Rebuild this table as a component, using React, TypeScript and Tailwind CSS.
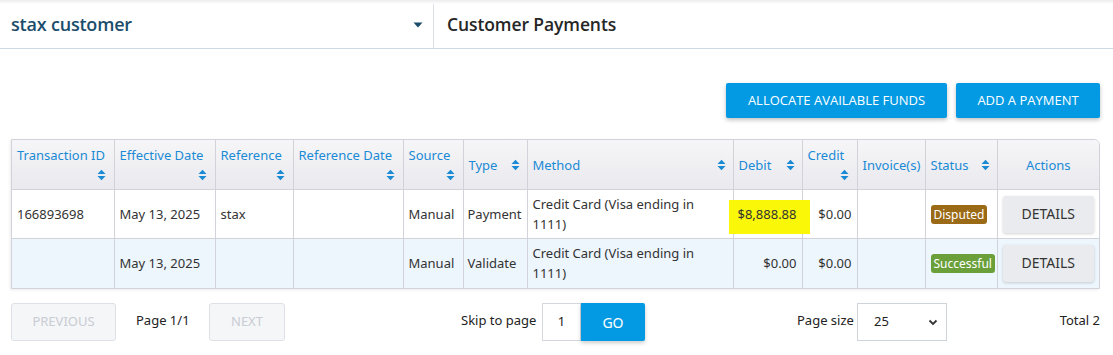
import React from "react";

const SortIcon = () => (
  <svg width="9" height="12" viewBox="0 0 9 12" className="shrink-0">
    <path d="M0.5 5 L4.5 0.8 L8.5 5 Z" fill="#1a8ad4" />
    <path d="M0.5 7 L4.5 11.2 L8.5 7 Z" fill="#1a8ad4" />
  </svg>
);

type Col = { label: string; w: number; kind: "stack" | "inline" | "plain" | "center" };

const cols: Col[] = [
  { label: "Transaction ID", w: 102, kind: "stack" },
  { label: "Effective Date", w: 101, kind: "stack" },
  { label: "Reference", w: 78, kind: "stack" },
  { label: "Reference Date", w: 110, kind: "stack" },
  { label: "Source", w: 60, kind: "stack" },
  { label: "Type", w: 64, kind: "inline" },
  { label: "Method", w: 206, kind: "inline" },
  { label: "Debit", w: 69, kind: "inline" },
  { label: "Credit", w: 55, kind: "stack" },
  { label: "Invoice(s)", w: 68, kind: "plain" },
  { label: "Status", w: 72, kind: "inline" },
  { label: "Actions", w: 102, kind: "center" },
];

const Badge = ({ text, color }: { text: string; color: string }) => (
  <span
    className={`inline-block rounded-[3px] px-[3px] text-[12px] leading-[19px] text-white ${color}`}
  >
    {text}
  </span>
);

const DetailsBtn = () => (
  <button className="h-[37px] w-[91px] rounded-[3px] bg-[#e9ebee] text-[14px] text-[#333] shadow-[0_1px_3px_rgba(0,0,0,0.18)]">
    DETAILS
  </button>
);

export default function App() {
  const tbl = "font-['Noto_Sans',sans-serif]";
  return (
    <div className="w-[1113px] h-[355px] overflow-hidden bg-white font-['Open_Sans',sans-serif]">
      {/* Top header */}
      <div className="relative flex h-[49px] border-b border-[#cfd9e2] bg-white">
        <div className="pointer-events-none absolute inset-x-0 top-0 h-[4px] bg-gradient-to-b from-[#ececec] to-white" />
        <div className="flex w-[434px] items-center justify-between border-r border-[#d8dfe6] pl-[11px] pr-[8px]">
          <span className="text-[18px] font-semibold text-[#1b4d6b] tracking-[-0.2px]">stax customer</span>
          <svg width="10" height="6" viewBox="0 0 10 6" className="mt-[1px] mr-[2px]">
            <path d="M0.5 0.5 L9.5 0.5 L5 5.5 Z" fill="#1b4d6b" />
          </svg>
        </div>
        <div className="flex items-center pl-[13px]">
          <span className="text-[17.5px] font-semibold text-[#262626] tracking-[-0.1px]">Customer Payments</span>
        </div>
      </div>

      {/* Content */}
      <div className="px-[11px]">
        <div className="flex justify-end gap-[9px] pt-[34px] pr-[2px]">
          <button className="h-[35px] w-[221px] rounded-[2px] bg-[#049ae3] text-[13px] text-white shadow-[0_2px_4px_rgba(0,0,0,0.25)]">
            ALLOCATE AVAILABLE FUNDS
          </button>
          <button className="h-[35px] w-[144px] rounded-[2px] bg-[#049ae3] text-[13px] text-white shadow-[0_2px_4px_rgba(0,0,0,0.25)]">
            ADD A PAYMENT
          </button>
        </div>

        <div className={`mt-[21px] w-[1089px] overflow-hidden rounded-tr-[6px] border border-[#d2d2da] shadow-[-1px_1px_3px_rgba(0,0,0,0.08)] ${tbl}`}>
          <table className="w-full table-fixed border-collapse text-[13px]">
            <colgroup>
              {cols.map((c, i) => (
                <col key={i} style={{ width: c.w }} />
              ))}
            </colgroup>
            <thead>
              <tr className="h-[49px] bg-gradient-to-b from-[#f6f6f8] to-[#e9e9ee]">
                {cols.map((c, i) => (
                  <th
                    key={i}
                    className={`border-l border-[#d2d2da] p-0 align-top font-normal text-[#1a8ad4] first:border-l-0`}
                  >
                    {c.kind === "stack" && (
                      <div className="flex h-[49px] flex-col justify-between pl-[5px] pr-[8px] pt-[5px] pb-[8px] text-left leading-[20px]">
                        <span className="whitespace-nowrap">{c.label}</span>
                        <div className="flex justify-end">
                          <SortIcon />
                        </div>
                      </div>
                    )}
                    {c.kind === "inline" && (
                      <div className="flex h-[49px] items-center justify-between pl-[5px] pr-[7px] leading-[20px]">
                        <span>{c.label}</span>
                        <SortIcon />
                      </div>
                    )}
                    {c.kind === "plain" && (
                      <div className="flex h-[49px] items-center pl-[5px] leading-[20px]">
                        <span>{c.label}</span>
                      </div>
                    )}
                    {c.kind === "center" && (
                      <div className="flex h-[49px] items-center justify-center leading-[20px]">
                        <span>{c.label}</span>
                      </div>
                    )}
                  </th>
                ))}
              </tr>
            </thead>
            <tbody className="text-[#333] leading-[20px]">
              <tr className="h-[49px] border-t border-[#d2d2da] bg-white">
                <td className="px-[5px]">166893698</td>
                <td className="border-l border-[#d2d2da] px-[5px]">May 13, 2025</td>
                <td className="border-l border-[#d2d2da] px-[5px]">stax</td>
                <td className="border-l border-[#d2d2da] px-[5px]"></td>
                <td className="border-l border-[#d2d2da] px-[5px]">Manual</td>
                <td className="border-l border-[#d2d2da] px-[4px]">Payment</td>
                <td className="border-l border-[#d2d2da] px-[5px]">Credit Card (Visa ending in 1111)</td>
                <td className="relative border-l border-[#d2d2da] pr-[5px] text-right">
                  <span className="absolute left-[-5px] right-[-8px] top-[10px] bottom-[4px] bg-[#fbf708]" />
                  <span className="relative">$8,888.88</span>
                </td>
                <td className="border-l border-[#d2d2da] pr-[5px] text-right">$0.00</td>
                <td className="border-l border-[#d2d2da]"></td>
                <td className="border-l border-[#d2d2da] pl-[5px]">
                  <Badge text="Disputed" color="bg-[#9b6a17]" />
                </td>
                <td className="border-l border-[#d2d2da] text-center">
                  <DetailsBtn />
                </td>
              </tr>
              <tr className="h-[49px] border-t border-[#d2d2da] bg-[#edf5fd]">
                <td className="px-[5px]"></td>
                <td className="border-l border-[#d2d2da] px-[5px]">May 13, 2025</td>
                <td className="border-l border-[#d2d2da] px-[5px]"></td>
                <td className="border-l border-[#d2d2da] px-[5px]"></td>
                <td className="border-l border-[#d2d2da] px-[5px]">Manual</td>
                <td className="border-l border-[#d2d2da] px-[4px]">Validate</td>
                <td className="border-l border-[#d2d2da] px-[5px]">Credit Card (Visa ending in 1111)</td>
                <td className="border-l border-[#d2d2da] pr-[5px] text-right">$0.00</td>
                <td className="border-l border-[#d2d2da] pr-[5px] text-right">$0.00</td>
                <td className="border-l border-[#d2d2da]"></td>
                <td className="border-l border-[#d2d2da] pl-[5px]">
                  <Badge text="Successful" color="bg-[#6a9f3a]" />
                </td>
                <td className="border-l border-[#d2d2da] text-center">
                  <DetailsBtn />
                </td>
              </tr>
            </tbody>
          </table>
        </div>

        {/* Pagination */}
        <div className={`mt-[14px] flex h-[39px] w-[1089px] items-center text-[13px] text-[#222] ${tbl}`}>
          <button className="h-[38px] w-[105px] rounded-[3px] border border-[#dde1e6] bg-[#f5f6f8] text-[13px] text-[#c8ccd3]">
            PREVIOUS
          </button>
          <span className="ml-[20px] mb-[2px] w-[73px]">Page 1/1</span>
          <button className="h-[38px] w-[76px] rounded-[3px] border border-[#dde1e6] bg-[#f5f6f8] text-[13px] text-[#c8ccd3]">
            NEXT
          </button>
          <span className="ml-[176px] mb-[2px] w-[81px]">Skip to page</span>
          <div className="flex h-[38px] w-[39px] items-center justify-center border border-[#d4d8dd] bg-white">1</div>
          <button className="h-[38px] w-[64px] rounded-r-[2px] bg-[#049ae3] text-[14px] text-white shadow-[0_2px_4px_rgba(0,0,0,0.2)]">
            GO
          </button>
          <span className="ml-[152px] mb-[2px] w-[60px]">Page size</span>
          <div className="flex h-[38px] w-[90px] items-center justify-between border border-[#cfd4da] bg-white pl-[16px] pr-[8px]">
            <span>25</span>
            <svg width="10" height="7" viewBox="0 0 10 7">
              <path d="M1.5 1.5 L5 5 L8.5 1.5" stroke="#333" strokeWidth="1.8" fill="none" />
            </svg>
          </div>
          <span className="ml-auto mb-[2px]">Total 2</span>
        </div>
      </div>
    </div>
  );
}
